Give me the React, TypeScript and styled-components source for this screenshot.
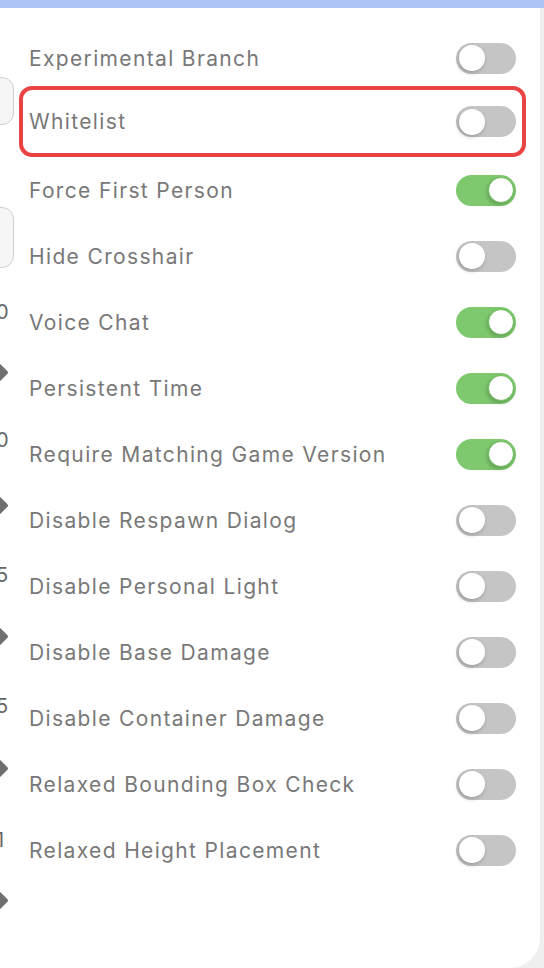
import styled, { createGlobalStyle } from 'styled-components';

const GlobalStyle = createGlobalStyle`
  html, body {
    margin: 0;
    padding: 0;
    background: #efefef;
  }
  * {
    box-sizing: border-box;
  }
`;

interface Setting {
  label: string;
  on: boolean;
  highlighted?: boolean;
}

const settings: Setting[] = [
  { label: 'Experimental Branch', on: false },
  { label: 'Whitelist', on: false, highlighted: true },
  { label: 'Force First Person', on: true },
  { label: 'Hide Crosshair', on: false },
  { label: 'Voice Chat', on: true },
  { label: 'Persistent Time', on: true },
  { label: 'Require Matching Game Version', on: true },
  { label: 'Disable Respawn Dialog', on: false },
  { label: 'Disable Personal Light', on: false },
  { label: 'Disable Base Damage', on: false },
  { label: 'Disable Container Damage', on: false },
  { label: 'Relaxed Bounding Box Check', on: false },
  { label: 'Relaxed Height Placement', on: false },
];

// bits of the column behind the panel that peek out on the left edge
const peeks: { kind: 'box' | 'digit' | 'diamond'; top: number; text?: string; h?: number }[] = [
  { kind: 'box', top: 69, h: 48 },
  { kind: 'box', top: 82, h: 61 },
  { kind: 'digit', top: 34, text: '0' },
  { kind: 'diamond', top: 43.5 },
  { kind: 'digit', top: 51.5, text: '0' },
  { kind: 'diamond', top: 48.5 },
  { kind: 'digit', top: 53.5, text: '5' },
  { kind: 'diamond', top: 44.5 },
  { kind: 'digit', top: 53.5, text: '5' },
  { kind: 'diamond', top: 45.5 },
  { kind: 'digit', top: 55.5, text: '1' },
  { kind: 'diamond', top: 43.5 },
];

const Page = styled.div`
  width: 544px;
  height: 968px;
  overflow: hidden;
  display: flex;
  flex-direction: column;
  font-family: Inter, 'Liberation Sans', sans-serif;
`;

const TopBar = styled.div`
  height: 8px;
  flex-shrink: 0;
  background: #abc5f7;
`;

const Body = styled.div`
  flex: 1;
  display: flex;
`;

const Panel = styled.div`
  width: 540px;
  background: #ffffff;
  border-bottom-right-radius: 30px;
  display: flex;
`;

const EdgeStrip = styled.div`
  width: 19px;
  flex-shrink: 0;
  overflow: hidden;
  display: flex;
  flex-direction: column;
  align-items: flex-start;
`;

const PeekBox = styled.div<{ $top: number; $h: number }>`
  margin-top: ${(p) => p.$top}px;
  margin-left: -30px;
  width: 44px;
  height: ${(p) => p.$h}px;
  border: 1.5px solid #cfcfcf;
  border-radius: 12px;
  background: #f6f6f6;
  flex-shrink: 0;
`;

const PeekDigit = styled.div<{ $top: number }>`
  margin-top: ${(p) => p.$top}px;
  margin-left: -4px;
  height: 20px;
  font-size: 20px;
  line-height: 20px;
  color: #666;
  flex-shrink: 0;
`;

const PeekDiamond = styled.div<{ $top: number }>`
  margin-top: ${(p) => p.$top}px;
  margin-left: -7px;
  width: 13px;
  height: 13px;
  background: #6f6f6f;
  transform: rotate(45deg);
  border-radius: 2px;
  flex-shrink: 0;
`;

const List = styled.div`
  width: 507px;
  padding-top: 17px;
  display: flex;
  flex-direction: column;
`;

const Row = styled.div<{ $highlighted?: boolean }>`
  height: ${(p) => (p.$highlighted ? 71 : 66)}px;
  margin-top: ${(p) => (p.$highlighted ? -5 : 0)}px;
  display: flex;
  align-items: center;
  justify-content: space-between;
  padding: 0 6px;
  border: 4px solid ${(p) => (p.$highlighted ? '#ea4343' : 'transparent')};
  border-radius: 13px;
`;

const Label = styled.span`
  font-size: 21px;
  letter-spacing: 1.35px;
  color: #787878;
`;

const Track = styled.div<{ $on: boolean }>`
  width: 60px;
  height: 31px;
  border-radius: 16px;
  padding: 2.5px;
  display: flex;
  justify-content: ${(p) => (p.$on ? 'flex-end' : 'flex-start')};
  background: ${(p) => (p.$on ? '#7ec96e' : '#c5c5c5')};
`;

const Knob = styled.div<{ $on: boolean }>`
  width: 26px;
  height: 26px;
  border-radius: 50%;
  background: #ffffff;
  border: ${(p) => (p.$on ? '1px solid #6dbb5e' : 'none')};
  box-shadow: -1px 2px 4px rgba(0, 0, 0, 0.22);
`;

export default function App() {
  return (
    <Page>
      <GlobalStyle />
      <TopBar />
      <Body>
        <Panel>
          <EdgeStrip>
            {peeks.map((p, i) => {
              if (p.kind === 'box') return <PeekBox key={i} $top={p.top} $h={p.h ?? 46} />;
              if (p.kind === 'digit') return <PeekDigit key={i} $top={p.top}>{p.text}</PeekDigit>;
              return <PeekDiamond key={i} $top={p.top} />;
            })}
          </EdgeStrip>
          <List>
            {settings.map((s) => (
              <Row key={s.label} $highlighted={s.highlighted}>
                <Label>{s.label}</Label>
                <Track $on={s.on}>
                  <Knob $on={s.on} />
                </Track>
              </Row>
            ))}
          </List>
        </Panel>
      </Body>
    </Page>
  );
}
